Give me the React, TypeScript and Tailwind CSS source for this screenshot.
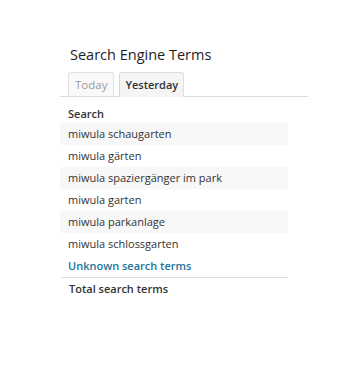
import React from 'react';

const terms = [
  'miwula schaugarten',
  'miwula gärten',
  'miwula spaziergänger im park',
  'miwula garten',
  'miwula parkanlage',
  'miwula schlossgarten',
];

export default function App() {
  return (
    <div className="w-[354px] h-[365px] bg-white text-[#333] pl-[60px] pt-[44px]" style={{ fontFamily: '"Open Sans", sans-serif' }}>
      <h3 className="pl-[10px] text-[14.5px] leading-[22px] text-[#1e1e1e]">Search Engine Terms</h3>

      <div className="w-[248px] mt-[6px] flex items-end gap-[5px] pl-[8px] border-b border-[#dcdcdc]">
        <div className="h-[24px] px-[6px] flex items-center bg-[#f9f9f9] border border-b-0 border-[#e2e2e2] rounded-t-[3px] text-[11.5px] text-[#999]">
          Today
        </div>
        <div className="h-[25px] px-[5px] flex items-center bg-[#f5f5f5] border border-b-0 border-[#dcdcdc] rounded-t-[3px] text-[11px] font-semibold text-[#333] -mb-px">
          Yesterday
        </div>
      </div>

      <div className="w-[228px]">
        <div className="h-[26px] pl-[8px] pt-[8px] text-[11px] font-semibold leading-[18px] text-[#333]">Search</div>
        {terms.map((t, i) => (
          <div
            key={t}
            className={`h-[22px] pl-[8px] flex items-center text-[11px] text-[#333] ${i % 2 === 0 ? 'bg-[#f7f7f7]' : ''}`}
          >
            {t}
          </div>
        ))}
        <div className="h-[22px] pl-[8px] flex items-center text-[11px] font-semibold text-[#21759b]">
          Unknown search terms
        </div>
        <div className="h-[24px] pl-[8px] flex items-center border-t border-[#dcdcdc] ml-px text-[11px] font-semibold text-[#333]">
          Total search terms
        </div>
      </div>
    </div>
  );
}
